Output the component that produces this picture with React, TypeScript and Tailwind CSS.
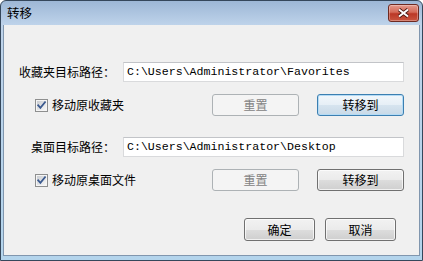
import React from "react";

function Checkbox({ id }: { id: string }) {
  return (
    <svg width="13" height="13" viewBox="0 0 13 13" className="shrink-0">
      <defs>
        <linearGradient id={id} x1="0" y1="0" x2="1" y2="1">
          <stop offset="0" stopColor="#c9ccd1" />
          <stop offset="1" stopColor="#f7f7f7" />
        </linearGradient>
      </defs>
      <rect x="0.5" y="0.5" width="12" height="12" fill="#f5f5f5" stroke="#8e8f8f" />
      <rect x="2" y="2" width="9" height="9" fill={`url(#${id})`} />
      <path d="M3.2 6.3 L5.4 8.9 L10 3.2" stroke="#3b5a8f" strokeWidth="1.8" fill="none" strokeLinecap="square" />
    </svg>
  );
}

function CloseBtn() {
  return (
    <div className="w-[31px] h-[18px] rounded-[3px] border border-[#6e2a21] bg-[linear-gradient(to_bottom,#e39a8c_0%,#d46a58_45%,#bb3826_55%,#c9553f_100%)] flex items-center justify-center shadow-[inset_0_0_0_1px_rgba(255,255,255,0.3)]">
      <svg width="13" height="10" viewBox="0 0 13 10">
        <path d="M2 1.5 L11 8.5 M11 1.5 L2 8.5" stroke="#4a1711" strokeWidth="3.6" fill="none" />
        <path d="M2 1.5 L11 8.5 M11 1.5 L2 8.5" stroke="#ffffff" strokeWidth="2" fill="none" />
      </svg>
    </div>
  );
}

function Btn({
  children,
  kind = "normal",
  className = "",
}: {
  children: React.ReactNode;
  kind?: "normal" | "disabled" | "focused";
  className?: string;
}) {
  const styles =
    kind === "disabled"
      ? "border-[#adb2b5] bg-[#f4f4f4] text-[#838383]"
      : kind === "focused"
      ? "border-[#3c7fb1] bg-[linear-gradient(to_bottom,#f2f7fb_0%,#e6eff6_50%,#d6e4ef_51%,#c8d9e7_100%)] text-black shadow-[inset_0_0_0_1px_#b4dbf5]"
      : "border-[#707070] bg-[linear-gradient(to_bottom,#f2f2f2_0%,#ebebeb_50%,#dddddd_51%,#cfcfcf_100%)] text-black shadow-[inset_0_0_0_1px_rgba(255,255,255,0.7)]";
  return (
    <div className={`h-full border rounded-[3px] flex items-center justify-center leading-none ${styles} ${className}`}>
      {children}
    </div>
  );
}

function PathRow({ label, value }: { label: string; value: string }) {
  return (
    <div className="flex items-center h-[20px]">
      <div className="w-[111px] text-right leading-none whitespace-nowrap">{label}</div>
      <div className="ml-[8px] w-[281px] h-[20px] bg-white border border-[#d9dadc] border-t-[#c2c4c8] pl-[3px] flex items-center font-['Liberation_Mono',monospace] text-[11.6px] leading-none whitespace-nowrap">
        {value}
      </div>
    </div>
  );
}

function ActionRow({ label, id }: { label: string; id: string }) {
  return (
    <div className="flex items-center h-[22px]">
      <div className="w-[208px] pl-[31px] flex items-center gap-[4px]">
        <Checkbox id={id} />
        <span className="leading-none whitespace-nowrap">{label}</span>
      </div>
      <Btn kind="disabled" className="w-[87px]">重置</Btn>
      <div className="w-[18px]" />
      <Btn kind={id === "c1" ? "focused" : "normal"} className="w-[87px]">转移到</Btn>
    </div>
  );
}

export default function App() {
  return (
    <div className="w-[423px] h-[261px] flex flex-col border border-[#35475b] rounded-t-[6px] overflow-hidden bg-[linear-gradient(to_bottom,#9db7d6_0px,#bed3ea_24px,#b3d4ec_100%)] font-['Noto_Sans_CJK_SC',sans-serif] text-[12px] text-black">
      <div className="h-[24px] shrink-0 flex items-center justify-between pl-[6px] pr-[3px]">
        <span className="leading-none text-[12.5px] mt-[1px]">转移</span>
        <CloseBtn />
      </div>
      <div className="flex-1 mx-[2px] mb-[4px] bg-[#f0f0f0] border-l border-r border-b border-[#8096ae] flex flex-col pt-[37px]">
        <PathRow label="收藏夹目标路径：" value={"C:\\Users\\Administrator\\Favorites"} />
        <div className="mt-[12px]">
          <ActionRow label="移动原收藏夹" id="c1" />
        </div>
        <div className="mt-[21px]">
          <PathRow label="桌面目标路径：" value={"C:\\Users\\Administrator\\Desktop"} />
        </div>
        <div className="mt-[12px]">
          <ActionRow label="移动原桌面文件" id="c2" />
        </div>
        <div className="mt-[27px] w-[392px] h-[23px] flex justify-end gap-[10px]">
          <Btn className="w-[71px]">确定</Btn>
          <Btn className="w-[71px]">取消</Btn>
        </div>
      </div>
    </div>
  );
}
